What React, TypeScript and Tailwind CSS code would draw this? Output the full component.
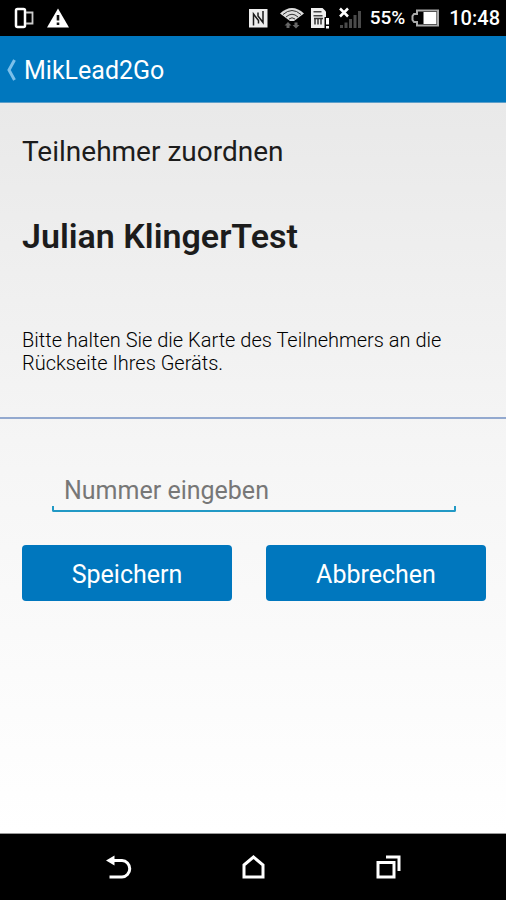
import { useState } from 'react';

function StatusBar() {
  return (
    <div className="flex h-9 items-center justify-between bg-black pl-3.5 pr-1.5 text-white">
      <div className="flex items-center gap-3">
        {/* Phone with cover */}
        <svg className="h-6 w-5" viewBox="0 0 20 24" fill="none" stroke="#fff">
          <rect x="2" y="3" width="9" height="18" rx="1.5" strokeWidth="2.500" />
          <path d="M12 6.500h6.500v11H12" stroke="#ccc" strokeWidth="1.800" />
        </svg>
        {/* Warning */}
        <svg className="h-6 w-6" viewBox="0 0 24 24">
          <path d="M12 2.500 23 21.500H1z" fill="#fff" />
          <path d="M10.700 9h2.600v5.500h-2.600zM10.700 16.500h2.600v2.500h-2.600z" fill="#111" />
        </svg>
      </div>

      <div className="flex items-center">
        {/* NFC */}
        <svg className="mr-3 h-6 w-5" viewBox="0 0 20 24">
          <path d="M1 3h18.500v18.500H1z" fill="#eee" />
          <path d="M5.500 19.500V8l5 6.500v3M15 5v11.500L10 10V6.500" fill="none" stroke="#1a1a1a" strokeWidth="1.500" />
        </svg>
        {/* Wifi with traffic arrows */}
        <svg className="mr-1.5 h-6 w-6" viewBox="0 0 24 24" fill="none">
          <path d="M0 7.500Q12-3.500 24 7.500L14 15h-4z" fill="#ddd" />
          <path d="M3 8.500Q12 .5 21 8.500M6 11Q12 5.500 18 11M9 13Q12 10.500 15 13" stroke="#333" strokeWidth="1" />
          <path d="M8 16l3.500 3.500H9.500V22h-3v-2.500h-2zM16 22.500l-3.500-3.500h2V16.500h3V19h2z" fill="#666" />
        </svg>
        {/* SIM card alert */}
        <svg className="mr-2 h-6 w-5" viewBox="0 0 20 24">
          <path d="M1 2h11.500L16 5.500V22H1z" fill="#eee" />
          <path d="M3.500 5h8v1.500h-8zM3.500 9h9v1.500h-9z" fill="#444" />
          <path d="M5 12.500v6M8 12.500v6M11 12.500v6M4 12.500h9" fill="none" stroke="#333" strokeWidth="1.500" />
          <path d="M14.500 11H20v13h-5.500z" fill="#000" />
          <path d="M16 12h3v6.500h-3zM16 20h3v2.500h-3z" fill="#fff" />
        </svg>
        {/* No signal */}
        <svg className="mr-2 h-6 w-6" viewBox="0 0 24 24">
          <path d="M2 19h3v3H2zM6.500 16.500h3V22h-3zM11 13h3v9h-3zM15.500 9h3v13h-3zM20 5h3v17h-3z" fill="#4a4a4a" />
          <path d="m2 2.500 8 8m0-8-8 8" stroke="#fff" strokeWidth="2.500" />
        </svg>
        <span className="mr-1.5 text-[19px] font-medium">55%</span>
        {/* Battery */}
        <svg className="mr-2.5 h-5 w-7" viewBox="0 0 28 20">
          <path d="M6 2.500h21v15H6V14H3l-1.500-2V8L3 6h3z" fill="none" stroke="#aaa" strokeWidth="2" />
          <path d="M12.500 4h13v12h-13z" fill="#fff" />
        </svg>
        <span className="text-xl font-medium">10:48</span>
      </div>
    </div>
  );
}

function NavigationBar() {
  return (
    <nav className="flex h-[67px] items-center justify-center gap-[107px] border-t border-[#999] bg-black text-white">
      <button type="button" aria-label="Zurück">
        <svg className="h-7 w-7" viewBox="0 0 28 28" fill="none">
          <path d="M8 7.500h10a7.500 8 0 0 1 0 16.500H5.500" stroke="currentColor" strokeWidth="3" />
          <path d="M2 7.500 10.500 2.500v10z" fill="currentColor" />
        </svg>
      </button>
      <button type="button" aria-label="Startseite">
        <svg className="h-7 w-7" viewBox="0 0 28 28" fill="none" stroke="currentColor" strokeWidth="3">
          <path d="M5 12 14.500 4l9.500 8v12H5z" />
        </svg>
      </button>
      <button type="button" aria-label="Letzte Apps">
        <svg className="h-7 w-7" viewBox="0 0 28 28" fill="none" stroke="currentColor" strokeWidth="3">
          <path d="M4 9.500h16V24H4zM12 4h13v14" />
        </svg>
      </button>
    </nav>
  );
}

export default function App() {
  const [number, setNumber] = useState('');

  return (
    <div className="flex min-h-screen flex-col font-[Roboto,sans-serif] text-[#1c1c1c]">
      <StatusBar />

      {/* Title bar */}
      <header className="flex h-[67px] items-center border-b border-[#5d9fca] bg-[#0077be] pl-1.5 pt-1 text-white shadow-[0_1px_5px_rgba(0,0,0,0.2)]">
        <a href="#" className="flex items-center gap-2 text-[25px]">
          <svg className="h-6 w-2.5" viewBox="0 0 10 24" fill="none" stroke="#7cc0ea" strokeWidth="3">
            <path d="M8.500 1 3 11l5.500 10" />
          </svg>
          MikLead2Go
        </a>
      </header>

      <main className="flex-1 bg-linear-to-b from-[#e9e9e9] via-[#f6f6f6] to-white">
        <section className="border-b-2 border-[#93a9cf] px-[22px] pb-[42px] pt-[31px]">
          <h1 className="text-[28px] leading-9">Teilnehmer zuordnen</h1>
          <h2 className="mt-[46px] text-[34px] font-semibold leading-10">Julian KlingerTest</h2>
          <p className="mt-[73px] text-[20px] font-[350] leading-[23px] text-black">
            Bitte halten Sie die Karte des Teilnehmers an die Rückseite Ihres Geräts.
          </p>
        </section>

        <form className="pl-[22px] pr-5 pt-[51px]" onSubmit={(e) => e.preventDefault()}>
          <div className="ml-[30px] mr-[30px]">
            <input
              type="text"
              aria-label="Nummer eingeben"
              placeholder="Nummer eingeben"
              value={number}
              onChange={(e) => setNumber(e.target.value)}
              className="block h-9 w-full bg-transparent px-3 pt-1.5 text-[25px] outline-none placeholder:text-[#777]"
            />
            <div className="h-1.5 rounded-b-xs border-x-2 border-b-2 border-[#2199c5]" />
          </div>
          <div className="mt-[33px] grid grid-cols-[21fr_22fr] gap-[34px]">
            <button type="submit" className="h-14 rounded bg-[#0077be] pt-1 text-[25px] text-white">
              Speichern
            </button>
            <button type="button" className="h-14 rounded bg-[#0077be] pt-1 text-[25px] text-white" onClick={() => setNumber('')}>
              Abbrechen
            </button>
          </div>
        </form>
      </main>

      <NavigationBar />
    </div>
  );
}
